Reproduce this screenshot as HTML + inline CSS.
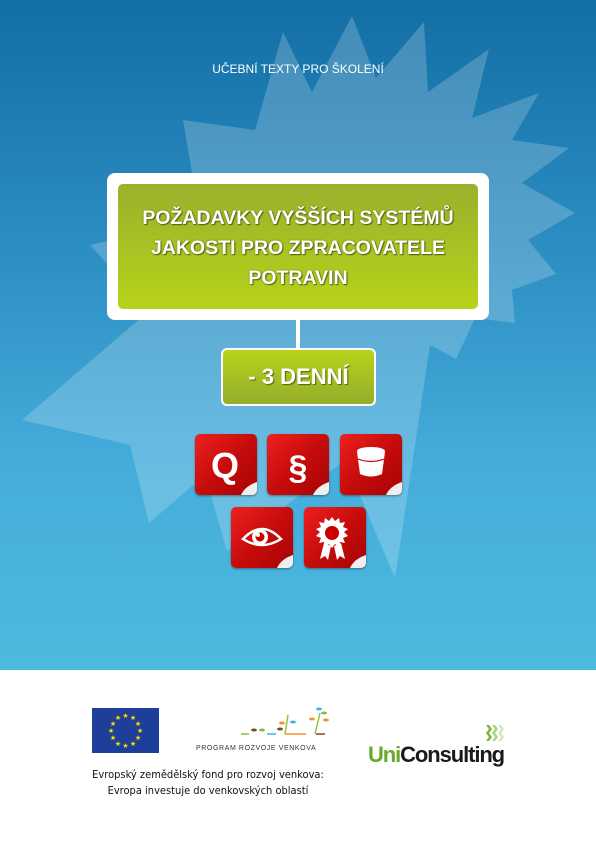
<!DOCTYPE html>
<html><head><meta charset="utf-8"><style>
*{margin:0;padding:0;box-sizing:border-box}
body{width:596px;height:841px;position:relative;overflow:hidden;background:#fff;font-family:"Liberation Sans",sans-serif}
.bg{position:absolute;left:0;top:0;width:596px;height:670px;background:linear-gradient(#136ea5 0%,#2a8cc0 35%,#45addb 70%,#4cbadf 100%)}
.abs{position:absolute}
.sub{left:0;width:596px;top:62px;text-align:center;color:#fff;font-size:12px}
.outer{left:107px;top:173px;width:382px;height:147px;background:#fff;border-radius:8px}
.inner{left:118px;top:184px;width:360px;height:125px;border-radius:5px;background:linear-gradient(#9ab02c,#b8d31a);color:#fff;font-weight:bold;font-size:19.5px;text-align:center;line-height:30px;padding-top:19px;text-shadow:1px 1px 1px #556010,0 0 2px #70801a}
.line{left:296px;top:318px;width:4px;height:32px;background:#fff}
.small{left:221px;top:348px;width:155px;height:58px;border:2.5px solid #fff;border-radius:6px;background:linear-gradient(#b8d31a,#94ad2b);color:#fff;font-weight:bold;font-size:22px;text-align:center;line-height:53px;text-shadow:1px 1px 1px #556010}
.ic{width:62px;height:61px;border-radius:5px;background:linear-gradient(135deg,#ee2020 0%,#c70c0c 50%,#a60404 100%);box-shadow:0 1px 2px rgba(0,0,0,.4);overflow:hidden}
.ic svg{position:absolute;left:0;top:0}
.foot{font-family:"DejaVu Sans Condensed","DejaVu Sans",sans-serif;font-size:11px;color:#111;text-align:center;left:60px;width:296px;line-height:16px;top:767px}
</style></head><body>
<div class="bg"></div>
<svg class="abs" style="left:0;top:0" width="596" height="670">
<polygon fill="rgba(255,255,255,0.2)" points="283,32 312,92 352,16 376,78 424,22 428,92 489,49 472,118 539,93 512,140 569,148 522,183 575,213 528,240 556,274 512,290 515,323 475,318 456,359 430,345 395,578 345,460 227,551 205,475 149,523 130,445 22,420 150,310 90,245 200,220 183,120 255,130"/>
</svg>
<div class="abs sub">UČEBNÍ TEXTY PRO ŠKOLENÍ</div>
<div class="abs outer"></div>
<div class="abs inner">POŽADAVKY VYŠŠÍCH SYSTÉMŮ<br>JAKOSTI PRO ZPRACOVATELE<br>POTRAVIN</div>
<div class="abs line"></div>
<div class="abs small">- 3 DENNÍ</div>

<div class="abs ic" style="left:195px;top:434px"><svg width="62" height="61"><text x="30" y="44" text-anchor="middle" font-family="Liberation Sans" font-weight="bold" font-size="36" fill="#fff">Q</text><path d="M46 61 Q50 52 62 48 L62 61Z" fill="#eee"/></svg></div>
<div class="abs ic" style="left:267px;top:434px"><svg width="62" height="61"><text x="31" y="45" text-anchor="middle" font-family="Liberation Sans" font-weight="bold" font-size="34" fill="#fff">§</text><path d="M46 61 Q50 52 62 48 L62 61Z" fill="#eee"/></svg></div>
<div class="abs ic" style="left:340px;top:434px"><svg width="62" height="61"><ellipse cx="31" cy="17" rx="14" ry="4" fill="#fff"/><path d="M17 18 L20 40 Q31 45 42 40 L45 18 Q31 24 17 18Z" fill="#fff"/><path d="M18 25 Q31 30 44 25" stroke="#c00" stroke-width="1.2" fill="none"/><path d="M46 61 Q50 52 62 48 L62 61Z" fill="#eee"/></svg></div>
<div class="abs ic" style="left:231px;top:507px"><svg width="62" height="61"><path d="M12 32 Q31 12 50 32 Q31 44 12 32Z" fill="none" stroke="#fff" stroke-width="2.5"/><circle cx="29" cy="30" r="8" fill="#fff"/><circle cx="29" cy="30" r="4.5" fill="#c00"/><circle cx="27" cy="28" r="2" fill="#fff"/><path d="M46 61 Q50 52 62 48 L62 61Z" fill="#eee"/></svg></div>
<div class="abs ic" style="left:304px;top:507px"><svg width="62" height="61"><polygon fill="#fff" points="25,14 28,10 31,14 35,11 36,16 41,15 39,20 44,22 40,25 44,29 39,31 41,36 36,35 35,40 31,37 28,41 25,37 21,40 20,35 15,36 17,31 12,29 16,25 12,22 17,20 15,15 20,16 21,11"/><circle cx="28" cy="26" r="7" fill="#c00"/><path d="M20 36 L16 52 L21 49 L24 53 L27 39Z M30 39 L33 53 L36 49 L41 52 L37 36Z" fill="#fff"/><path d="M46 61 Q50 52 62 48 L62 61Z" fill="#eee"/></svg></div>

<svg class="abs" style="left:92px;top:708px" width="67" height="45"><rect width="67" height="45" fill="#1d3f9a"/><g fill="#ffdd00" font-size="7" text-anchor="middle"><text x="33.5" y="10">★</text><text x="41" y="12">★</text><text x="46" y="18">★</text><text x="48" y="25">★</text><text x="46" y="32">★</text><text x="41" y="38">★</text><text x="33.5" y="40">★</text><text x="26" y="38">★</text><text x="21" y="32">★</text><text x="19" y="25">★</text><text x="21" y="18">★</text><text x="26" y="12">★</text></g></svg>
<svg class="abs" style="left:240px;top:705px" width="90" height="32"><g stroke-width="1.5"><line x1="1" y1="29" x2="9" y2="29" stroke="#8fb83a"/><line x1="27" y1="29" x2="36" y2="29" stroke="#3fb6e0"/><line x1="45" y1="29" x2="66" y2="29" stroke="#f0932d"/><line x1="76" y1="29" x2="85" y2="29" stroke="#7a4a25"/><line x1="45" y1="29" x2="48" y2="10" stroke="#9bc23c"/><line x1="75" y1="29" x2="80" y2="8" stroke="#9bc23c"/></g><g><ellipse cx="14" cy="25" rx="3" ry="1.5" fill="#7a4a25"/><ellipse cx="22" cy="25" rx="3" ry="1.5" fill="#8fb83a"/><ellipse cx="40" cy="24" rx="3" ry="1.5" fill="#7a4a25"/><ellipse cx="42" cy="18" rx="3" ry="1.5" fill="#f0932d"/><ellipse cx="53" cy="17" rx="3" ry="1.5" fill="#3fb6e0"/><ellipse cx="72" cy="14" rx="3" ry="1.5" fill="#f0932d"/><ellipse cx="84" cy="8" rx="3" ry="1.5" fill="#8fb83a"/><ellipse cx="79" cy="4" rx="3" ry="1.5" fill="#3fb6e0"/><ellipse cx="86" cy="15" rx="3" ry="1.5" fill="#f0932d"/></g></svg>
<div class="abs" style="left:196px;top:745px;font-size:7px;letter-spacing:0.6px;color:#333">PROGRAM ROZVOJE VENKOVA</div>
<div class="abs foot">Evropský zemědělský fond pro rozvoj venkova:<br>Evropa investuje do venkovských oblastí</div>
<svg class="abs" style="left:486px;top:725px" width="18" height="16"><g fill="#7ab338"><path d="M0 0h3l3 4-3 4H0l3-4z M0 8h3l3 4-3 4H0l3-4z"/></g><g fill="#a9d37a"><path d="M6 0h3l3 4-3 4H6l3-4z M6 8h3l3 4-3 4H6l3-4z"/></g><g fill="#d2e8b8"><path d="M12 0h3l3 4-3 4h-3l3-4z M12 8h3l3 4-3 4h-3l3-4z"/></g></svg>
<div class="abs" style="left:368px;top:742px;font-size:22px;font-weight:bold;letter-spacing:-1.1px;color:#1a1a1a"><span style="color:#6aaa2a">Uni</span>Consulting</div>
</body></html>
